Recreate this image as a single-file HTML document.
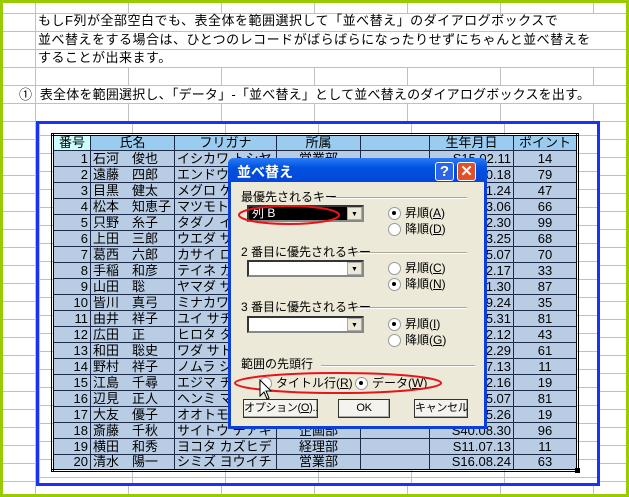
<!DOCTYPE html>
<html><head><meta charset="utf-8"><style>
*{margin:0;padding:0;box-sizing:border-box}
body{width:629px;height:497px;position:relative;overflow:hidden;background:#fff;font-family:"Liberation Sans","Noto Sans CJK JP",sans-serif;font-size:13px;color:#000}
.frame{position:absolute;left:0;top:0;width:629px;height:497px;border:3px solid #99cc00}
.grid{position:absolute;left:3px;top:0;width:623px;height:494px;
background-image:linear-gradient(to right,#c0c0c0 1px,transparent 1px),linear-gradient(to bottom,#c0c0c0 1px,transparent 1px);
background-size:93px 18px;background-position:32px 13px}
.wb{position:absolute;left:36px;width:558px;height:17px;background:#fff}
.t{position:absolute;left:38px;white-space:nowrap;font-size:13px;line-height:18px;letter-spacing:0.5px}
.blue{position:absolute;left:36px;top:121px;width:564px;height:365px;border:3px solid #1a33f0;background:
linear-gradient(to right,#c0c0c0 1px,transparent 1px) 93px 0/93px 18px,linear-gradient(to bottom,#c0c0c0 1px,transparent 1px) 0 11px/93px 18px,#fff;background-color:#fff}
table{position:absolute;left:51px;top:133px;border-collapse:collapse;border:3px double #000;table-layout:fixed}
td{height:16px;border:1px solid #1c2a48;background:#b8cce4;font-size:13px;line-height:14px;padding:0 2px;white-space:nowrap;overflow:hidden}
tr.h td{background:#99ccee;text-align:center}
tr.h td:first-child{background:#ccffff}
td.r{text-align:right}td.c{text-align:center}
.dlg{position:absolute;left:228px;top:158px;width:259px;height:271px;background:#ece9d8;border:3px solid #0a3fd8;border-top:none;border-radius:6px 6px 0 0}
.tb{position:absolute;left:-3px;top:0;width:259px;height:24px;background:linear-gradient(#2c7cf6,#0052e0 40%,#0446d8);border-radius:6px 6px 0 0;color:#fff;font-weight:bold;font-size:14px;padding:4px 0 0 9px}
.btnh,.btnx{position:absolute;top:4px;width:19px;height:19px;border:1px solid #fff;border-radius:3px;color:#fff;font-weight:bold;text-align:center;line-height:17px;font-size:15px}
.btnh{left:207px;background:#2a64e8}.btnx{left:229px;background:#e0502a}
.lbl{position:absolute;font-size:12px;line-height:14px;white-space:nowrap}
.ln{position:absolute;height:2px;border-top:1px solid #aca899;border-bottom:1px solid #fff}
.cb{position:absolute;width:117px;height:17px;background:#fff;border:2px inset #888;}
.cb .dd{position:absolute;right:0;top:0;width:15px;height:13px;background:#ece9d8;border:1px solid #aaa;font-size:7px;text-align:center;line-height:13px}
.rd{position:absolute;font-size:12px;line-height:14px;white-space:nowrap;padding-left:17px}
.rd:before{content:"";position:absolute;left:0;top:1px;width:11px;height:11px;border-radius:50%;border:1px solid #999;background:#fff}
.rd.on:after{content:"";position:absolute;left:4px;top:5px;width:4px;height:4px;border-radius:50%;background:#000}
.bt{position:absolute;top:241px;height:19px;border:1px solid #333;background:#f4f3ee;font-size:11px;text-align:center;line-height:17px;box-shadow:inset -1px -1px #aaa;white-space:nowrap;overflow:hidden;letter-spacing:-0.3px}
</style></head><body>
<div class="grid"></div>
<div class="wb" style="top:14px"></div>
<div class="wb" style="top:32px"></div>
<div class="wb" style="top:50px"></div>
<div class="wb" style="top:86px"></div>
<div class="t" style="top:12px">もしF列が全部空白でも、表全体を範囲選択して「並べ替え」のダイアログボックスで</div>
<div class="t" style="top:31px">並べ替えをする場合は、ひとつのレコードがばらばらになったりせずにちゃんと並べ替えを</div>
<div class="t" style="top:49px">することが出来ます。</div>
<div class="t" style="top:86px;left:19px;letter-spacing:0.2px">①&nbsp;&nbsp;表全体を範囲選択し、「データ」-「並べ替え」として並べ替えのダイアログボックスを出す。</div>
<div class="blue"></div>
<table>
<colgroup><col style="width:38px"><col style="width:84px"><col style="width:102px"><col style="width:84px"><col style="width:69px"><col style="width:84px"><col style="width:64px"></colgroup>
<tr class="h"><td>番号</td><td>氏名</td><td>フリガナ</td><td>所属</td><td></td><td>生年月日</td><td>ポイント</td></tr>
<tr><td class="r">1</td><td>石河　俊也</td><td>イシカワ トシヤ</td><td class="c">営業部</td><td></td><td class="r">S15.02.11</td><td class="c">14</td></tr>
<tr><td class="r">2</td><td>遠藤　四郎</td><td>エンドウ シロウ</td><td class="c">営業部</td><td></td><td class="r">S20.10.18</td><td class="c">79</td></tr>
<tr><td class="r">3</td><td>目黒　健太</td><td>メグロ ケンタ</td><td class="c">経理部</td><td></td><td class="r">S33.11.24</td><td class="c">47</td></tr>
<tr><td class="r">4</td><td>松本　知恵子</td><td>マツモト チエコ</td><td class="c">企画部</td><td></td><td class="r">S43.03.06</td><td class="c">66</td></tr>
<tr><td class="r">5</td><td>只野　糸子</td><td>タダノ イトコ</td><td class="c">営業部</td><td></td><td class="r">S25.12.30</td><td class="c">99</td></tr>
<tr><td class="r">6</td><td>上田　三郎</td><td>ウエダ サブロウ</td><td class="c">経理部</td><td></td><td class="r">S28.03.25</td><td class="c">68</td></tr>
<tr><td class="r">7</td><td>葛西　六郎</td><td>カサイ ロクロウ</td><td class="c">営業部</td><td></td><td class="r">S30.05.07</td><td class="c">70</td></tr>
<tr><td class="r">8</td><td>手稲　和彦</td><td>テイネ カズヒコ</td><td class="c">企画部</td><td></td><td class="r">S41.02.17</td><td class="c">33</td></tr>
<tr><td class="r">9</td><td>山田　聡</td><td>ヤマダ サトシ</td><td class="c">営業部</td><td></td><td class="r">S35.01.30</td><td class="c">87</td></tr>
<tr><td class="r">10</td><td>皆川　真弓</td><td>ミナカワ マユミ</td><td class="c">経理部</td><td></td><td class="r">S22.09.24</td><td class="c">35</td></tr>
<tr><td class="r">11</td><td>由井　祥子</td><td>ユイ サチコ</td><td class="c">営業部</td><td></td><td class="r">S38.05.31</td><td class="c">81</td></tr>
<tr><td class="r">12</td><td>広田　正</td><td>ヒロタ タダシ</td><td class="c">企画部</td><td></td><td class="r">S19.12.12</td><td class="c">43</td></tr>
<tr><td class="r">13</td><td>和田　聡史</td><td>ワダ サトシ</td><td class="c">営業部</td><td></td><td class="r">S27.02.29</td><td class="c">61</td></tr>
<tr><td class="r">14</td><td>野村　祥子</td><td>ノムラ ショウコ</td><td class="c">経理部</td><td></td><td class="r">S31.07.13</td><td class="c">11</td></tr>
<tr><td class="r">15</td><td>江島　千尋</td><td>エジマ チヒロ</td><td class="c">営業部</td><td></td><td class="r">S44.12.16</td><td class="c">19</td></tr>
<tr><td class="r">16</td><td>辺見　正人</td><td>ヘンミ マサト</td><td class="c">企画部</td><td></td><td class="r">S36.05.07</td><td class="c">81</td></tr>
<tr><td class="r">17</td><td>大友　優子</td><td>オオトモ ユウコ</td><td class="c">営業部</td><td></td><td class="r">S29.05.26</td><td class="c">19</td></tr>
<tr><td class="r">18</td><td>斎藤　千秋</td><td>サイトウ チアキ</td><td class="c">企画部</td><td></td><td class="r">S40.08.30</td><td class="c">96</td></tr>
<tr><td class="r">19</td><td>横田　和秀</td><td>ヨコタ カズヒデ</td><td class="c">経理部</td><td></td><td class="r">S11.07.13</td><td class="c">11</td></tr>
<tr><td class="r">20</td><td>清水　陽一</td><td>シミズ ヨウイチ</td><td class="c">営業部</td><td></td><td class="r">S16.08.24</td><td class="c">63</td></tr>
</table>
<div style="position:absolute;left:575px;top:468px;width:5px;height:5px;background:#000"></div>

<div class="dlg">
<div class="tb">並べ替え<div class="btnh">?</div><div class="btnx">✕</div></div>
<div class="lbl" style="left:10px;top:32px">最優先されるキー</div><div class="ln" style="left:100px;top:39px;width:136px"></div>
<div class="cb" style="left:16px;top:47px;background:#000"><span style="color:#fff;font-size:12px;position:absolute;left:3px;top:0;line-height:13px">列 B</span><div class="dd">▼</div></div>
<div class="rd on" style="left:157px;top:48px">昇順(<u>A</u>)</div>
<div class="rd" style="left:157px;top:64px">降順(<u>D</u>)</div>
<div class="lbl" style="left:10px;top:87px">2 番目に優先されるキー</div><div class="ln" style="left:127px;top:94px;width:109px"></div>
<div class="cb" style="left:16px;top:102px"><div class="dd">▼</div></div>
<div class="rd" style="left:157px;top:103px">昇順(<u>C</u>)</div>
<div class="rd on" style="left:157px;top:119px">降順(<u>N</u>)</div>
<div class="lbl" style="left:10px;top:142px">3 番目に優先されるキー</div><div class="ln" style="left:127px;top:149px;width:109px"></div>
<div class="cb" style="left:16px;top:158px"><div class="dd">▼</div></div>
<div class="rd on" style="left:157px;top:159px">昇順(<u>I</u>)</div>
<div class="rd" style="left:157px;top:175px">降順(<u>G</u>)</div>
<div class="lbl" style="left:10px;top:199px">範囲の先頭行</div><div class="ln" style="left:90px;top:207px;width:154px"></div>
<div class="rd" style="left:28px;top:218px">タイトル行(<u>R</u>)</div>
<div class="rd on" style="left:124px;top:218px">データ(<u>W</u>)</div>
<div class="bt" style="left:12px;width:75px">オプション(<u>O</u>)...</div>
<div class="bt" style="left:107px;width:52px">OK</div>
<div class="bt" style="left:183px;width:54px">キャンセル</div>
</div>
<svg style="position:absolute;left:0;top:0" width="629" height="497">
<ellipse cx="289" cy="215" rx="50" ry="9" fill="none" stroke="#e8141a" stroke-width="2"/>
<ellipse cx="338" cy="383" rx="103" ry="10" fill="none" stroke="#e8141a" stroke-width="2"/>
<path d="M260 380 L260 396 L264 392 L267 399 L269 398 L266 391 L271 391 Z" fill="#fff" stroke="#000" stroke-width="1"/>
</svg>
<div class="frame"></div>
</body></html>
